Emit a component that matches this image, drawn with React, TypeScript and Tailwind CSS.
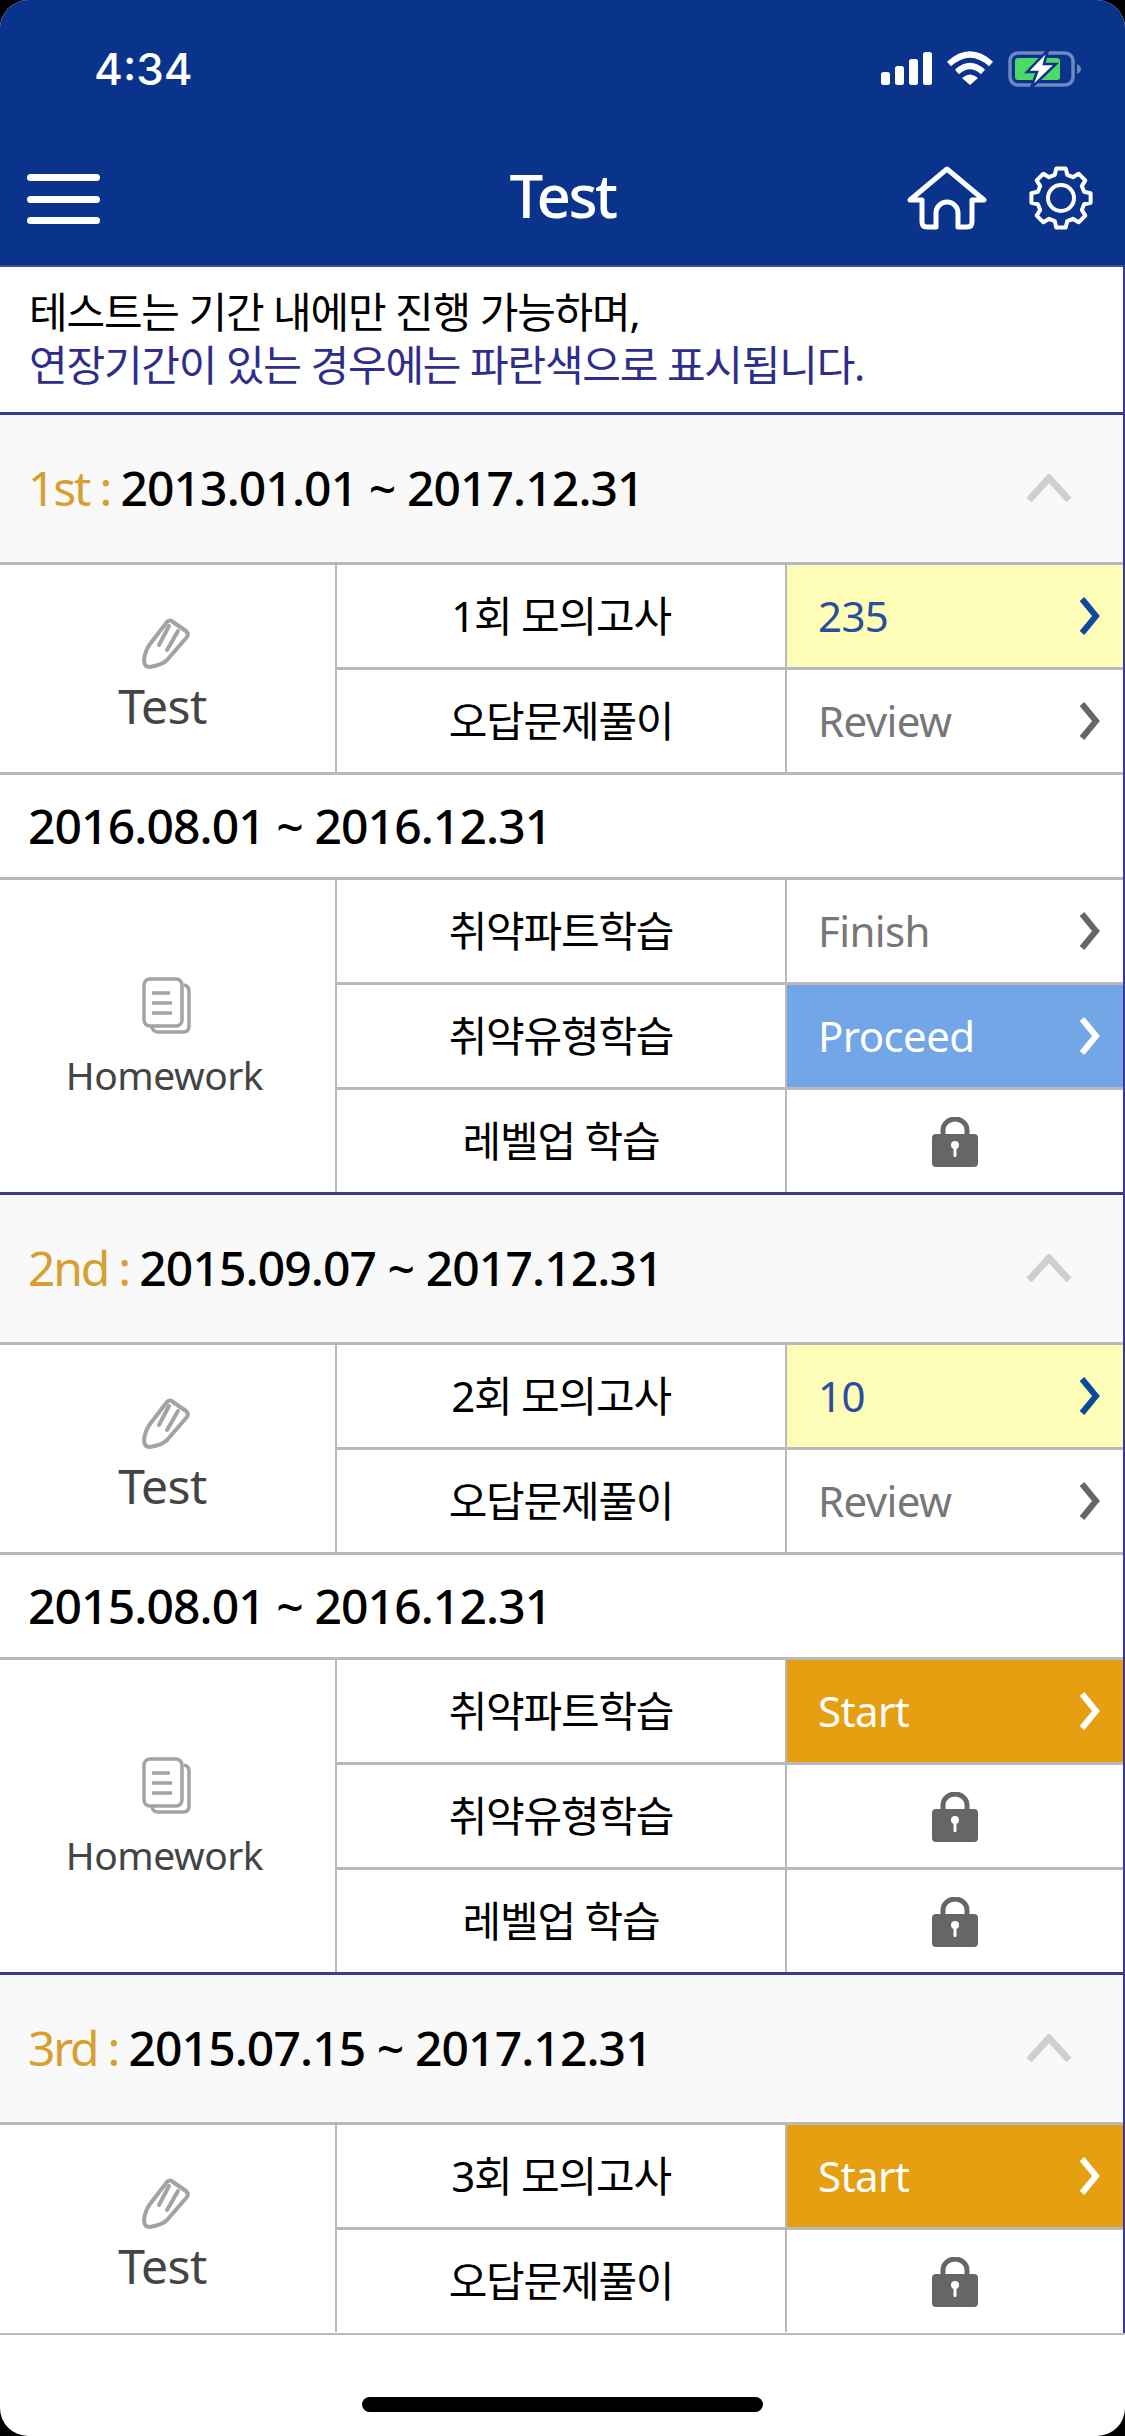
import React from "react";

const sans = "font-['Noto_Sans','Noto_Sans_CJK_KR',sans-serif]";

type Status =
  | { kind: "score"; text: string }
  | { kind: "plain"; text: string }
  | { kind: "proceed"; text: string }
  | { kind: "start"; text: string }
  | { kind: "lock" };

type Row = { label: string; status: Status };

function gearPath() {
  const teeth = 8;
  const outer = 30;
  const inner = 24;
  const pts: string[] = [];
  for (let i = 0; i < teeth; i++) {
    const a = (i * Math.PI * 2) / teeth - Math.PI / 2;
    const step = (Math.PI * 2) / teeth;
    const ring: [number, number][] = [
      [inner, a - step * 0.34],
      [outer, a - step * 0.2],
      [outer, a + step * 0.2],
      [inner, a + step * 0.34],
    ];
    ring.forEach(([r, t]) => {
      pts.push(`${(33 + r * Math.cos(t)).toFixed(1)} ${(32 + r * Math.sin(t)).toFixed(1)}`);
    });
  }
  return "M" + pts.join("L") + "Z";
}

function Chevron({ color }: { color: string }) {
  return (
    <svg width="22" height="38" viewBox="0 0 22 38" className="mt-[2px] shrink-0">
      <path d="M4 2 L18 19 L4 36" fill="none" stroke={color} strokeWidth="6" />
    </svg>
  );
}

function Lock() {
  return (
    <svg width="46" height="50" viewBox="0 0 46 50">
      <path d="M11 20 V13 a12 11 0 0 1 24 0 V20" fill="none" stroke="#666" strokeWidth="5" />
      <rect x="0" y="17" width="46" height="33" rx="4" fill="#666" />
      <circle cx="23" cy="28" r="4" fill="#fff" />
      <rect x="21.5" y="29" width="3" height="11" rx="1" fill="#fff" />
    </svg>
  );
}

function Pencil() {
  return (
    <svg width="50" height="52" viewBox="0 0 50 52" fill="none" stroke="#a3a3a3" strokeWidth="4" strokeLinejoin="round" strokeLinecap="round">
      <path d="M25 4 Q28 1 31 4 L44 13 Q47 16 45 19 L25 42 Q20 47 8 49 Q2 49 2 42 Q3 33 8 26 Z" />
      <path d="M36 13 L25 32" />
      <path d="M27 8 L17 27" />
    </svg>
  );
}

function Docs() {
  return (
    <svg width="50" height="58" viewBox="0 0 50 58" fill="none" stroke="#a3a3a3" strokeWidth="3.5">
      <rect x="2" y="2" width="38" height="47" rx="6" />
      <path d="M42 8 Q47 9 47 14 V49 Q47 55 41 55 H16 Q11 55 10 50" />
      <path d="M10 16 H28 M10 26 H30 M10 36 H30" strokeWidth="3.5" />
    </svg>
  );
}

function StatusCell({ status }: { status: Status }) {
  if (status.kind === "lock") {
    return (
      <div className="flex h-full items-center justify-center pt-[2px]">
        <Lock />
      </div>
    );
  }
  if (status.kind === "score") {
    return (
      <div className="flex h-full items-center justify-between bg-[#fdfdb7] pb-[2px] pl-[31px] pr-[23px] text-[#2a4d9c]">
        <span>{status.text}</span>
        <Chevron color="#0b4a9e" />
      </div>
    );
  }
  if (status.kind === "proceed") {
    return (
      <div className="flex h-full items-center justify-between bg-[#72a6e6] pb-[2px] pl-[31px] pr-[23px] text-white">
        <span>{status.text}</span>
        <Chevron color="#fff" />
      </div>
    );
  }
  if (status.kind === "start") {
    return (
      <div className="flex h-full items-center justify-between bg-[#e59f11] pb-[2px] pl-[31px] pr-[23px] text-white">
        <span>{status.text}</span>
        <Chevron color="#fff" />
      </div>
    );
  }
  return (
    <div className="flex h-full items-center justify-between pb-[2px] pl-[31px] pr-[23px] text-[#777]">
      <span>{status.text}</span>
      <Chevron color="#666" />
    </div>
  );
}

function Group({ kind, rows }: { kind: "test" | "homework"; rows: Row[] }) {
  return (
    <div className="flex border-t-[3px] border-[#b9b9b9]">
      <div className="flex w-[337px] shrink-0 flex-col items-center justify-center border-r-[2px] border-[#b9b9b9] text-[#444]">
        {kind === "test" ? (
          <div className="flex flex-col items-center pt-[14px]">
            <Pencil />
            <span className="mr-[10px] mt-[8px] text-[48px] leading-[56px] tracking-[-0.6px]">Test</span>
          </div>
        ) : (
          <div className="flex flex-col items-center pt-[4px]">
            <Docs />
            <span className="mr-[6px] mt-[16px] text-[39px] leading-[48px] tracking-[-0.5px]">Homework</span>
          </div>
        )}
      </div>
      <div className="flex-1">
        {rows.map((row, i) => (
          <div key={row.label} className={i === 0 ? "flex h-[102px]" : "flex h-[105px] border-t-[3px] border-[#b9b9b9]"}>
            <div className="flex w-[450px] shrink-0 items-center justify-center border-r-[2px] border-[#b9b9b9] pb-[2px] text-[42px] tracking-[-1.2px] text-black">
              {row.label}
            </div>
            <div className="flex-1 text-[42px] tracking-[-0.6px]">
              <StatusCell status={row.status} />
            </div>
          </div>
        ))}
      </div>
    </div>
  );
}

function Section(props: {
  order: string;
  range: string;
  test: Row[];
  homeworkRange?: string;
  homework?: Row[];
}) {
  return (
    <section className="border-t-[3px] border-[#3a3a92]">
      <div className="flex h-[147px] items-center justify-between bg-[#f9f9f9] pb-[2px] pl-[28px] pr-[51px] text-[48px] font-medium tracking-[-0.9px]">
        <p className="whitespace-pre">
          <span className="font-normal tracking-[-2.2px] text-[#d69f2f]">{props.order} : </span>
          <span className="text-black">{props.range}</span>
        </p>
        <svg width="46" height="28" viewBox="0 0 46 28" fill="none" stroke="#cfcfcf" strokeWidth="7">
          <path d="M3 26 L23 4 L43 26" />
        </svg>
      </div>
      <Group kind="test" rows={props.test} />
      {props.homework && (
        <>
          <div className="flex h-[105px] items-center border-t-[3px] border-[#b9b9b9] pl-[28px] text-[48px] font-medium tracking-[-0.9px] text-black">
            {props.homeworkRange}
          </div>
          <Group kind="homework" rows={props.homework} />
        </>
      )}
    </section>
  );
}

export default function App() {
  return (
    <div className="h-[2436px] w-[1125px] bg-black">
      <div className={`flex h-full w-full flex-col overflow-hidden rounded-[28px] bg-white ${sans}`}>
        <header className="h-[265px] shrink-0 bg-[#0a348b] text-white">
          <div className="flex h-[135px] items-center justify-between pl-[94px] pr-[43px] pt-[2px]">
            <span className="font-['Inter',sans-serif] text-[44px] font-medium leading-none">4:34</span>
            <svg width="201" height="36" viewBox="0 0 201 36">
              <rect x="0" y="21" width="9" height="13" rx="2.5" fill="#fff" />
              <rect x="14" y="15" width="9" height="19" rx="2.5" fill="#fff" />
              <rect x="28" y="8" width="9" height="26" rx="2.5" fill="#fff" />
              <rect x="42" y="1" width="9" height="33" rx="2.5" fill="#fff" />
              <path d="M68 13 Q89 -6 110 13" fill="none" stroke="#fff" strokeWidth="6" />
              <path d="M76 21 Q89 9 102 21" fill="none" stroke="#fff" strokeWidth="6" />
              <path d="M81 27 Q89 20 97 27 L89 34 Z" fill="#fff" />
              <rect x="129" y="2" width="63" height="32" rx="8" fill="none" stroke="#6f88bd" strokeWidth="3.5" />
              <rect x="134" y="7" width="45" height="22" rx="3" fill="#4cd964" />
              <path d="M196 13 Q200 15 200 18 Q200 21 196 23 Z" fill="#6f88bd" />
              <path d="M167 -1 L146 21 H156 L150 37 L175 13 H163 Z" fill="#fff" stroke="#0a348b" strokeWidth="2.5" />
            </svg>
          </div>
          <div className="relative flex h-[130px] items-start justify-between pl-[27px] pr-[31px]">
            <div className="mt-[39px] flex w-[73px] flex-col gap-[14.5px]">
              <div className="h-[7px] rounded-full bg-white" />
              <div className="h-[7px] rounded-full bg-white" />
              <div className="h-[7px] rounded-full bg-white" />
            </div>
            <h1 className="absolute left-0 right-0 top-[24px] text-center text-[60px] font-medium leading-[72px] tracking-[-2.5px]">Test</h1>
            <div className="mt-[31px] flex items-center gap-[41px]">
              <svg width="80" height="64" viewBox="0 0 80 64" fill="none" stroke="#fff" strokeWidth="5" strokeLinejoin="round">
                <path d="M40 3 L77 34 H65 V56 Q65 61 60 61 H51 V47 A11 11 0 0 0 29 47 V61 H20 Q15 61 15 56 V34 H3 Z" />
              </svg>
              <svg width="66" height="64" viewBox="0 0 66 64" fill="none" stroke="#fff" strokeWidth="4" strokeLinejoin="round">
                <path d={gearPath()} />
                <circle cx="33" cy="32" r="13" />
              </svg>
            </div>
          </div>
        </header>
        <main className="h-[2068px] shrink-0 overflow-hidden border-r-[2px] border-[#3a3a92]">
          <div className="h-[147px] border-t-[2px] border-[#4a4a9a] px-[29px] pt-[18px] text-[42px] leading-[53px] tracking-[-1.2px]">
            <p className="text-black">테스트는 기간 내에만 진행 가능하며,</p>
            <p className="text-[#2e2e8a]">연장기간이 있는 경우에는 파란색으로 표시됩니다.</p>
          </div>
          <Section
            order="1st"
            range="2013.01.01 ~ 2017.12.31"
            test={[
              { label: "1회 모의고사", status: { kind: "score", text: "235" } },
              { label: "오답문제풀이", status: { kind: "plain", text: "Review" } },
            ]}
            homeworkRange="2016.08.01 ~ 2016.12.31"
            homework={[
              { label: "취약파트학습", status: { kind: "plain", text: "Finish" } },
              { label: "취약유형학습", status: { kind: "proceed", text: "Proceed" } },
              { label: "레벨업 학습", status: { kind: "lock" } },
            ]}
          />
          <Section
            order="2nd"
            range="2015.09.07 ~ 2017.12.31"
            test={[
              { label: "2회 모의고사", status: { kind: "score", text: "10" } },
              { label: "오답문제풀이", status: { kind: "plain", text: "Review" } },
            ]}
            homeworkRange="2015.08.01 ~ 2016.12.31"
            homework={[
              { label: "취약파트학습", status: { kind: "start", text: "Start" } },
              { label: "취약유형학습", status: { kind: "lock" } },
              { label: "레벨업 학습", status: { kind: "lock" } },
            ]}
          />
          <Section
            order="3rd"
            range="2015.07.15 ~ 2017.12.31"
            test={[
              { label: "3회 모의고사", status: { kind: "start", text: "Start" } },
              { label: "오답문제풀이", status: { kind: "lock" } },
            ]}
          />
        </main>
        <div className="flex flex-1 flex-col items-center border-t-[2px] border-[#b9b9b9] pt-[62px]">
          <div className="h-[15px] w-[401px] rounded-full bg-black" />
        </div>
      </div>
    </div>
  );
}
